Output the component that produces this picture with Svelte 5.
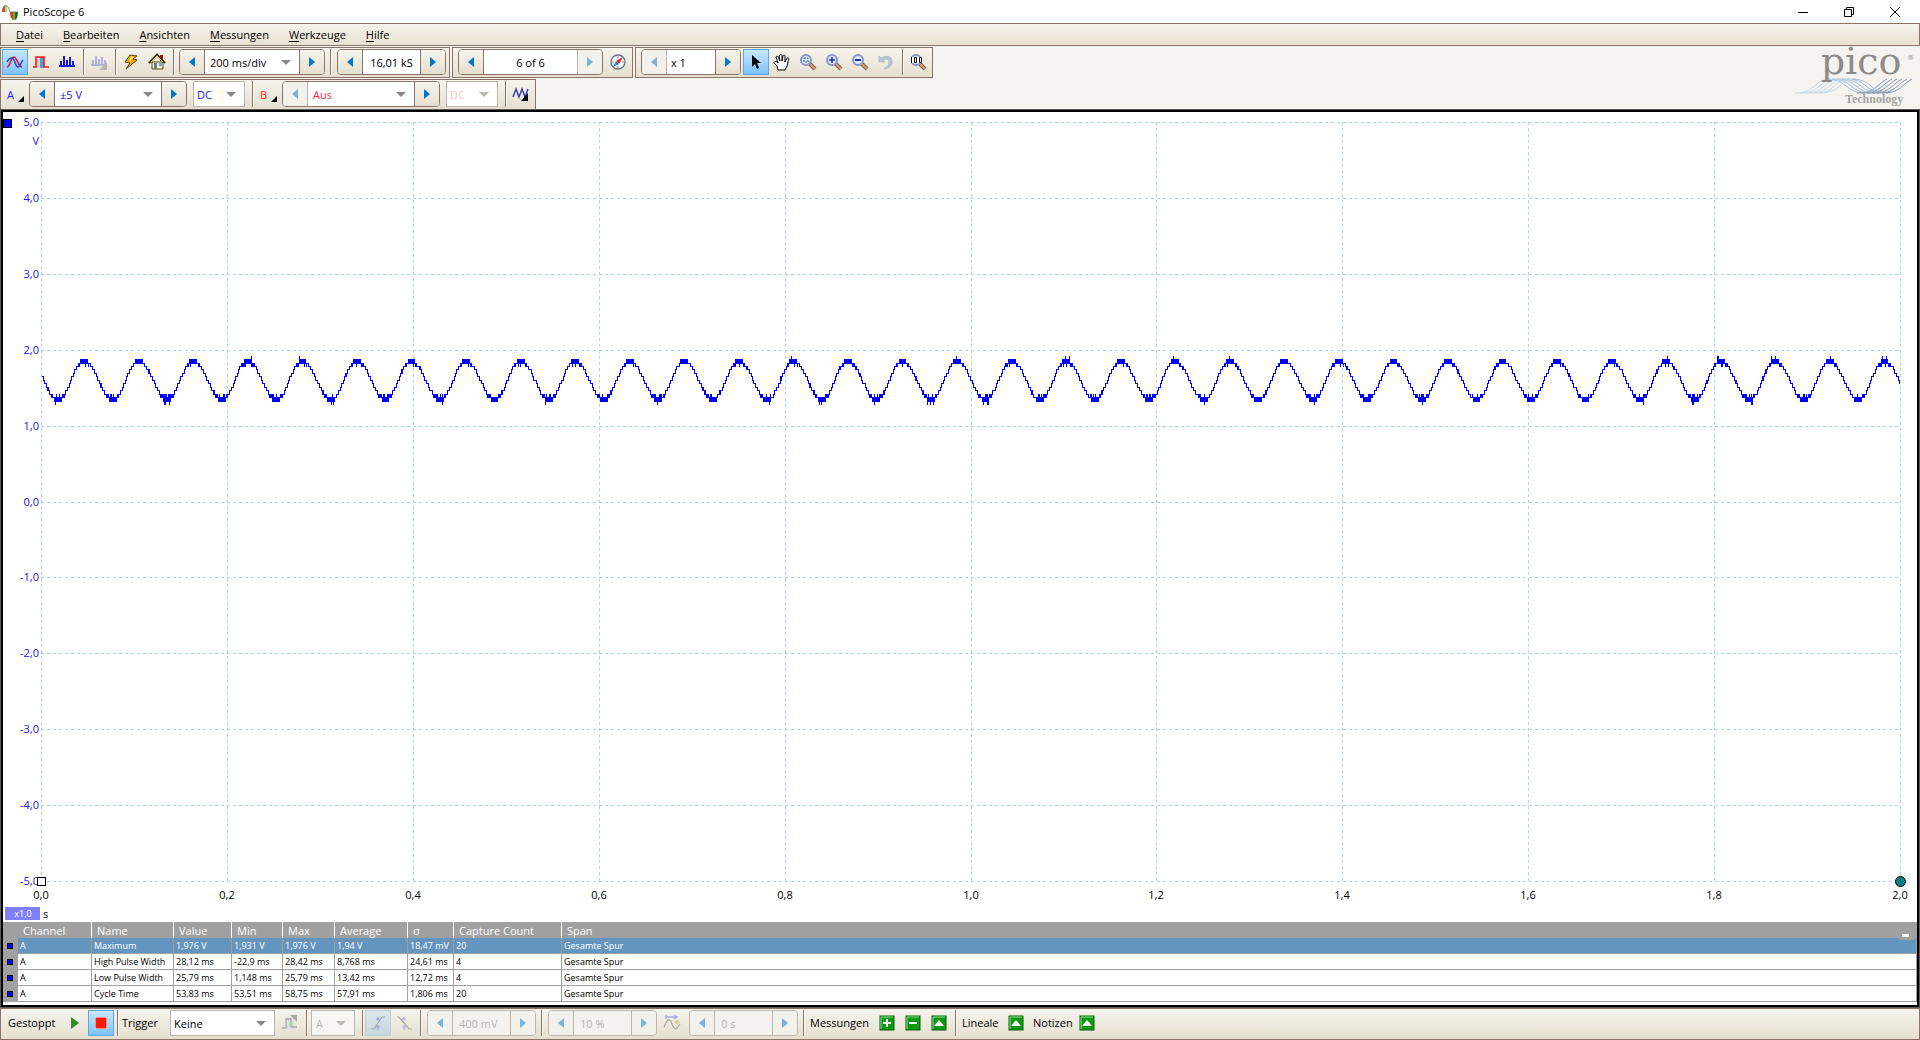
<script lang="ts">
  interface Measurement {
    channel: string;
    name: string;
    value: string;
    min: string;
    max: string;
    average: string;
    sigma: string;
    count: string;
    span: string;
  }

  const menu = ['Datei', 'Bearbeiten', 'Ansichten', 'Messungen', 'Werkzeuge', 'Hilfe'];

  const columns = ['Channel', 'Name', 'Value', 'Min', 'Max', 'Average', 'σ', 'Capture Count', 'Span'];

  const measurements: Measurement[] = [
    { channel: 'A', name: 'Maximum', value: '1,976 V', min: '1,931 V', max: '1,976 V', average: '1,94 V', sigma: '18,47 mV', count: '20', span: 'Gesamte Spur' },
    { channel: 'A', name: 'High Pulse Width', value: '28,12 ms', min: '-22,9 ms', max: '28,42 ms', average: '8,768 ms', sigma: '24,61 ms', count: '4', span: 'Gesamte Spur' },
    { channel: 'A', name: 'Low Pulse Width', value: '25,79 ms', min: '1,148 ms', max: '25,79 ms', average: '13,42 ms', sigma: '12,72 ms', count: '4', span: 'Gesamte Spur' },
    { channel: 'A', name: 'Cycle Time', value: '53,83 ms', min: '53,51 ms', max: '58,75 ms', average: '57,91 ms', sigma: '1,806 ms', count: '20', span: 'Gesamte Spur' }
  ];

  let selected = $state(0);

  // size of the scope view, follows the window
  let width = $state(1914);
  let height = $state(810);

  const left = 38;
  const top = 10;
  let right = $derived(width - 17);
  let bottom = $derived(height - 41);

  const steps = [0, 1, 2, 3, 4, 5, 6, 7, 8, 9, 10];
  let gridX = $derived(steps.map((i) => Math.round(left + ((right - left) * i) / 10)));
  let gridY = $derived(steps.map((i) => Math.round(top + ((bottom - top) * i) / 10)));

  const comma = (n: number) => n.toFixed(1).replace('.', ',');

  // one vertical stroke per pixel column, from the lowest to the highest ADC level
  function buildTrace(x0: number, x1: number, y0: number, y1: number) {
    const lsb = 0.0455;
    const offset = 0.011;
    const period = 0.05869;
    let seed = 77;
    const random = () => {
      seed = (seed * 1103515245 + 12345) % 2147483648;
      return seed / 2147483648;
    };
    const toLevel = (v: number) => Math.round((v - offset) / lsb);
    const toY = (level: number) => Math.round(y0 + ((5 - level * lsb - offset) / 10) * (y1 - y0));

    let path = '';
    let lastLow = 0;
    let lastHigh = 0;
    for (let x = x0 + 1; x < x1; x++) {
      const t = ((x - x0) / (x1 - x0)) * 2;
      let p = (t - 0.0457) / period;
      p = p - Math.floor(p);
      const c = p < 0.53 ? Math.cos((Math.PI * p) / 0.53) : Math.cos(Math.PI * (1 + (p - 0.53) / 0.47));
      const v = 1.605 + 0.257 * c;
      let low = toLevel(v - 0.022 * random());
      let high = toLevel(v + 0.022 * random());
      if (c > 0.9) {
        high = random() < 0.08 ? 42 : 41;
        low = random() < 0.1 ? 39 : 40;
      } else if (c > 0.75 && random() < 0.6) {
        low = 39;
        high = 40;
      } else if (c < -0.9) {
        low = random() < 0.08 ? 28 : 29;
        high = random() < 0.35 ? 31 : 30;
      } else if (c < -0.7 && random() < 0.7) {
        low = 30;
        high = 31;
      }
      if (x > x0 + 1) {
        if (low > lastHigh) low = lastHigh;
        if (high < lastLow) high = lastLow;
      }
      lastLow = low;
      lastHigh = high;
      path += `M${x + 0.5} ${toY(high)}V${toY(low) + 1}`;
    }
    return path;
  }

  let trace = $derived(buildTrace(left, right, top, bottom));
</script>

{#snippet icon(name: string)}
  <svg class="icon" width="18" height="18" viewBox="0 0 18 18" fill="none" aria-hidden="true">
    {#if name === 'scope'}
      <path d="M1 14C4 14 5 4 8 4S12 14 16 14" stroke="#e8202c" stroke-width="1.7" />
      <path d="M1 9C2 7 4 5 6 5C9 5 9 14 12 14C14 14 15 9 17 7" stroke="#2348c4" stroke-width="1.5" />
    {:else if name === 'persistence'}
      <rect x="5" y="4" width="4" height="10" fill="#fbd0d0" />
      <rect x="8" y="4" width="4" height="11" fill="#38a8dc" />
      <path d="M1 14H4V4H12V14H17" stroke="#ff1515" stroke-width="1.6" />
    {:else if name === 'spectrum'}
      <path d="M1 13H17M3 13V8M6 13V3M9 13V7M12 13V4M15 13V8" stroke="#1818d8" stroke-width="2" />
    {:else if name === 'spectrumOff'}
      <path d="M1 12H17M3 12V7M6 12V3M9 12V6M12 12V4M15 12V7" stroke="#b1b2d6" stroke-width="2" />
      <path d="M17 9V17H9Z" fill="#b9b5ad" />
    {:else if name === 'bolt'}
      <path d="M8 2L15 3L11 6L15 7L4 16L8 10L3 9Z" fill="#f5a900" stroke="#574010" stroke-width="1" />
      <path d="M9 3L12 4L7 9Z" fill="#ffe86b" />
    {:else if name === 'home'}
      <rect x="12" y="2" width="3" height="6" fill="#a01818" />
      <path d="M4 9H15V16H4Z" fill="#fff0b2" stroke="#584820" />
      <path d="M1 10L9 2L17 10" stroke="#3c3420" stroke-width="2.4" />
      <path d="M3 9L9 3L15 9" stroke="#f4cf50" stroke-width="1" />
      <rect x="6" y="10" width="3" height="6" fill="#5f7da1" />
      <rect x="11" y="10" width="3" height="3" fill="#76a7d6" />
    {:else if name === 'compass'}
      <circle cx="9" cy="9" r="7" fill="#f6f7fb" stroke="#6d7185" stroke-width="1.3" />
      <path d="M9 3V5M9 13V15M3 9H5M13 9H15" stroke="#8d90a6" />
      <path d="M14 4L10 11L7 8Z" fill="#ef2430" />
      <path d="M4 14L7 8L10 11Z" fill="#2e7bd6" />
    {:else if name === 'pointer'}
      <path d="M5 2V14L8 11L10 16L12 15L10 10H14Z" fill="#000" />
    {:else if name === 'hand'}
      <path d="M5 17L4 13L1 10C1 8 3 8 5 10L3 4C4 2 5 3 6 6L7 8L6 3C7 1 9 1 9 3V8L10 3C11 1 12 2 12 4L12 9L14 5C16 4 16 6 15 9L14 13L12 17Z" fill="#fff" stroke="#000" stroke-width="1" />
    {:else if name === 'undo'}
      <path d="M2 3V9H8L6 7C9 5 12 6 12 9C12 12 10 14 7 16C13 15 15 12 15 8C15 3 9 2 4 5Z" fill="#bcc4d6" stroke="#a4aec4" stroke-width="0.7" />
    {:else if name === 'waves'}
      <path d="M1 12L4 4L7 12L10 4L13 12L16 4" stroke="#3838ae" stroke-width="1.4" />
      <path d="M16 8V16H9Z" fill="#000" />
    {:else if name === 'advanced'}
      <rect x="6" y="3" width="7" height="13" fill="#d9e4e1" />
      <path d="M1 14H5V5H10V13H16" stroke="#aaa79f" stroke-width="1.3" />
      <path d="M9 1H16V8Z" fill="#aaa79f" />
      <circle cx="10" cy="10" r="2" fill="#a1dda5" />
    {:else if name === 'rising'}
      <path d="M2 15H5L13 3H16" stroke="#9fa8a8" stroke-width="1.2" />
      <path d="M9 3V7M7 5H11M9 11V16M7 13H11" stroke="#a09cea" stroke-width="1.2" />
    {:else if name === 'falling'}
      <path d="M2 3H4L14 15H17" stroke="#a7a49e" stroke-width="1.2" />
      <path d="M9 3V7M7 5H11M9 11V16M7 13H11" stroke="#b1aee0" stroke-width="1.2" />
    {:else if name === 'delay'}
      <path d="M1 13L4 7C6 4 8 7 9 10S12 16 14 14L17 10" stroke="#aaa6a0" stroke-width="1.2" />
      <path d="M3 3H13M3 1V5M11 1L14 3L11 5" stroke="#aaa7e1" stroke-width="1.3" />
      <path d="M14 5L17 8L14 11L11 8Z" fill="#d6d59d" />
    {:else}
      <path d="M10 10L16 16" stroke="#6d6662" stroke-width="4" />
      <path d="M10 10L16 16" stroke="#dc9864" stroke-width="2" />
      <circle cx="7" cy="7" r="5" fill="#d6edff" stroke="#8b94c2" stroke-width="2" />
      {#if name === 'zoomIn'}
        <path d="M4 7H10M7 4V10" stroke="#26349c" stroke-width="1.6" />
      {:else if name === 'zoomOut'}
        <path d="M4 7H10" stroke="#26349c" stroke-width="2" />
      {:else if name === 'zoomArea'}
        <rect x="5" y="5" width="4" height="4" stroke="#43549c" stroke-dasharray="2 1" />
      {:else}
        <rect x="1" y="4" width="12" height="6" fill="#fff" />
        <path d="M2.5 4V10M5.500 4.500H7.500V9.500H5.500ZM10.500 4.500H12.500V9.500H10.500Z" stroke="#111" stroke-width="1" />
      {/if}
    {/if}
  </svg>
{/snippet}

{#snippet tool(name: string, label: string, active: boolean = false, disabled: boolean = false)}
  <button class="tool" class:active {disabled} aria-label={label}>{@render icon(name)}</button>
{/snippet}

{#snippet arrow(direction: string, disabled: boolean = false)}
  <button class="arrow {direction}" {disabled} aria-label={direction === 'prev' ? 'Zurück' : 'Weiter'}>
    <svg width="6" height="10" viewBox="0 0 6 10" aria-hidden="true">
      <path d={direction === 'prev' ? 'M6 0V10L0 5Z' : 'M0 0V10L6 5Z'} fill="#0078c8" />
    </svg>
  </button>
{/snippet}

{#snippet green(name: string, label: string)}
  <button class="green" aria-label={label}>
    <svg width="16" height="16" viewBox="0 0 16 16" aria-hidden="true">
      <rect x="1" y="1" width="14" height="14" fill="#0c9a12" stroke="#075c09" />
      <path d="M2 14V2H14" fill="none" stroke="#8fdc90" />
      {#if name === 'up'}
        <path d="M3 11L8 5L13 11Z" fill="#fff" />
      {:else}
        <path d={name === 'plus' ? 'M4 8H12M8 4V12' : 'M4 8H12'} stroke="#fff" stroke-width="2" />
      {/if}
    </svg>
  </button>
{/snippet}

<div class="window">
  <header class="titlebar">
    <svg width="18" height="18" viewBox="0 0 18 18" aria-hidden="true">
      <path d="M1 9C2 1 7 0 9 9Z" fill="#e5f4dc" />
      <path d="M1 9C2 5 2 3 4 2V9Z" fill="#f04040" />
      <path d="M4 2C6 2 6 5 6 9H4Z" fill="#a7e060" />
      <path d="M9 9H12V17C10 16 9 13 9 9Z" fill="#d44418" />
      <path d="M12 9H14V17H12Z" fill="#68b52c" />
      <path d="M14 9H17C17 13 16 16 14 17Z" fill="#176e25" />
      <path d="M1 9C2 1 7 0 9 9M9 9H17" fill="none" stroke="#6a6a5c" stroke-width="0.8" />
    </svg>
    <span class="caption">PicoScope 6</span>
    <div class="window-buttons">
      <button aria-label="Minimieren"><svg width="10" height="10" viewBox="0 0 10 10"><path d="M0 5.5H10" stroke="#000" /></svg></button>
      <button aria-label="Wiederherstellen">
        <svg width="10" height="10" viewBox="0 0 10 10" fill="none" stroke="#000"><path d="M.5 2.5H7.5V9.5H.5ZM2.5 2.5V.5H9.5V7.5H7.5" /></svg>
      </button>
      <button aria-label="Schließen"><svg width="10" height="10" viewBox="0 0 10 10" stroke="#000"><path d="M0 0L10 10M10 0L0 10" /></svg></button>
    </div>
  </header>

  <nav class="menu">
    {#each menu as item}
      <button><u>{item[0]}</u>{item.slice(1)}</button>
    {/each}
  </nav>

  <div class="tools">
    <div class="tool-rows">
      <div class="tool-row">
        <div class="bar">
          {@render tool('scope', 'Oszilloskop', true)}
          {@render tool('persistence', 'Persistenz')}
          {@render tool('spectrum', 'Spektrum')}
          <span class="separator"></span>
          {@render tool('spectrumOff', 'Spektrumoptionen', false, true)}
          <span class="separator"></span>
          {@render tool('bolt', 'Auto-Setup')}
          {@render tool('home', 'Start')}
          <span class="separator"></span>
          <div class="group">
            {@render arrow('prev')}
            <span class="drop timebase"><select aria-label="Zeitbasis"><option>200 ms/div</option></select></span>
            {@render arrow('next')}
          </div>
          <span class="separator"></span>
          <div class="group far">
            {@render arrow('prev')}
            <input class="samples" aria-label="Abtastungen" value="16,01 kS" />
            {@render arrow('next')}
          </div>
        </div>
        <div class="bar indent">
          <div class="group">
            {@render arrow('prev')}
            <input class="buffer" aria-label="Puffer" value="6 of 6" />
            {@render arrow('next', true)}
          </div>
          {@render tool('compass', 'Puffernavigator')}
        </div>
        <div class="bar indent">
          <div class="group">
            {@render arrow('prev', true)}
            <input class="zoom" aria-label="Zoomfaktor" value="x 1" />
            {@render arrow('next')}
          </div>
          {@render tool('pointer', 'Auswahl', true)}
          {@render tool('hand', 'Verschieben')}
          {@render tool('zoomArea', 'Bereich zoomen')}
          {@render tool('zoomIn', 'Vergrößern')}
          {@render tool('zoomOut', 'Verkleinern')}
          {@render tool('undo', 'Zoom rückgängig')}
          <span class="separator"></span>
          {@render tool('zoomFull', 'Volle Ansicht')}
        </div>
      </div>

      <div class="tool-row">
        <div class="bar">
          <button class="tool channel a">A</button>
          <div class="group near">
            {@render arrow('prev')}
            <span class="drop range a"><select aria-label="Bereich A"><option>±5 V</option></select></span>
            {@render arrow('next')}
          </div>
          <span class="drop boxed coupling a"><select aria-label="Kopplung A"><option>DC</option></select></span>
          <span class="separator"></span>
          <button class="tool channel b">B</button>
          <div class="group near">
            {@render arrow('prev', true)}
            <span class="drop range b"><select aria-label="Bereich B"><option>Aus</option></select></span>
            {@render arrow('next')}
          </div>
          <span class="drop boxed coupling b off"><select aria-label="Kopplung B" disabled><option>DC</option></select></span>
          <span class="separator"></span>
          {@render tool('waves', 'Signalgenerator')}
        </div>
      </div>
    </div>

    <svg class="logo" width="128" height="62" viewBox="0 0 128 62" role="img" aria-label="pico Technology">
      <g fill="none" stroke-width="1">
        {#each [0, 1, 2, 3, 4, 5] as i}
          <path d="M{4 + i * 5} 47C{26 + i * 5} 47 {22 + i * 5} 33 {40 + i * 5} 33" stroke="#c4d9e9" />
          <path d="M{36 + i * 5} 33C{56 + i * 5} 33 {54 + i * 5} 47 {74 + i * 5} 47" stroke="#a6bcd2" />
          <path d="M{66 + i * 5} 47C{84 + i * 5} 47 {84 + i * 5} 40 {96 + i * 5} 33" stroke="#8090a8" />
        {/each}
      </g>
      <text x="70" y="28" class="logo-name" text-anchor="middle">pico</text>
      <text x="116" y="14" class="logo-mark">®</text>
      <text x="54" y="57" class="logo-sub">Technology</text>
    </svg>
  </div>

  <main class="view">
    <div class="chart" bind:clientWidth={width} bind:clientHeight={height}>
      <svg {width} {height} role="img" aria-label="Kanal A">
        <g class="grid">
          {#each gridY as y}
            <path d="M{left} {y + 0.5}H{right}" />
          {/each}
          {#each gridX as x}
            <path d="M{x + 0.5} {top}V{bottom}" />
          {/each}
        </g>
        <path class="trace" d={trace} />
        <g class="volts" text-anchor="end">
          {#each gridY as y, i}
            <text x="36" y={y + 4}>{comma(5 - i)}</text>
          {/each}
          <text x="36" y="33">V</text>
        </g>
        <g class="seconds" text-anchor="middle">
          {#each gridX as x, i}
            <text {x} y={bottom + 18}>{comma(i / 5)}</text>
          {/each}
        </g>
        <rect x="0.5" y="7.5" width="8" height="8" fill="#0000ff" stroke="#000" />
        <rect x={left - 3.5} y={bottom - 3.5} width="8" height="8" fill="#fff" stroke="#000" />
        <circle cx={right + 0.5} cy={bottom + 0.5} r="5" fill="#008080" stroke="#000" />
        <rect x="2" y={bottom + 26} width="35" height="13" fill="#8080ff" />
        <text class="scale" x="20" y={bottom + 36} text-anchor="middle">x1,0</text>
        <text class="seconds" x="40" y={bottom + 37}>s</text>
      </svg>
    </div>

    <table>
      <colgroup>
        <col class="w-mark" />
        <col class="w-channel" />
        <col class="w-name" />
        <col class="w-value" />
        <col class="w-min" />
        <col class="w-max" />
        <col class="w-average" />
        <col class="w-sigma" />
        <col class="w-count" />
        <col />
      </colgroup>
      <thead>
        <tr>
          <th class="mark"></th>
          {#each columns as column}
            <th>{column}</th>
          {/each}
        </tr>
      </thead>
      <tbody>
        {#each measurements as m, i}
          <tr class:selected={i === selected} onclick={() => (selected = i)}>
            <td class="mark"><span></span></td>
            <td>{m.channel}</td>
            <td>{m.name}</td>
            <td>{m.value}</td>
            <td>{m.min}</td>
            <td>{m.max}</td>
            <td>{m.average}</td>
            <td>{m.sigma}</td>
            <td>{m.count}</td>
            <td>{m.span}</td>
          </tr>
        {/each}
      </tbody>
    </table>
    <button class="collapse" aria-label="Messungen minimieren"></button>
  </main>

  <footer class="bar status">
    <span class="label">Gestoppt</span>
    <button class="tool" aria-label="Start">
      <svg width="8" height="12" viewBox="0 0 8 12"><path d="M0 0V12L8 6Z" fill="#2e8b2e" /></svg>
    </button>
    <button class="tool active" aria-label="Stopp">
      <svg width="12" height="12" viewBox="0 0 12 12"><rect width="12" height="12" fill="#ff1a00" stroke="#fff" /></svg>
    </button>
    <span class="separator"></span>
    <label class="label trigger" for="trigger">Trigger</label>
    <span class="drop boxed mode"><select id="trigger"><option>Keine</option></select></span>
    {@render tool('advanced', 'Erweiterter Trigger', false, true)}
    <span class="separator"></span>
    <span class="drop boxed source off"><select aria-label="Triggerquelle" disabled><option>A</option></select></span>
    <span class="separator"></span>
    {@render tool('rising', 'Steigende Flanke', true, true)}
    {@render tool('falling', 'Fallende Flanke', false, true)}
    <span class="separator"></span>
    <div class="group far off">
      {@render arrow('prev', true)}
      <input class="level" aria-label="Schwelle" value="400 mV" disabled />
      {@render arrow('next', true)}
    </div>
    <span class="separator"></span>
    <div class="group far off">
      {@render arrow('prev', true)}
      <input class="level" aria-label="Vortrigger" value="10 %" disabled />
      {@render arrow('next', true)}
    </div>
    {@render tool('delay', 'Verzögerung', false, true)}
    <div class="group far off">
      {@render arrow('prev', true)}
      <input class="level" aria-label="Triggerverzögerung" value="0 s" disabled />
      {@render arrow('next', true)}
    </div>
    <span class="separator"></span>
    <span class="label measure">Messungen</span>
    {@render green('plus', 'Messung hinzufügen')}
    {@render green('minus', 'Messung löschen')}
    {@render green('up', 'Messung bearbeiten')}
    <span class="separator"></span>
    <span class="label rulers">Lineale</span>
    {@render green('up', 'Lineale')}
    <span class="label notes">Notizen</span>
    {@render green('up', 'Notizen')}
  </footer>
</div>

<style>
  :global(body) {
    margin: 0;
    overflow: hidden;
  }

  .window {
    display: flex;
    flex-direction: column;
    height: 100vh;
    background: #f5f3ef;
    color: #000;
    font-family: 'Open Sans', 'Noto Sans', sans-serif;
    font-size: 11px;
  }

  button,
  input,
  select {
    box-sizing: border-box;
    margin: 0;
    padding: 0;
    border: 0;
    border-radius: 0;
    background: none;
    color: inherit;
    font: inherit;
    outline: none;
  }

  svg {
    display: block;
    flex: none;
  }

  .titlebar {
    display: flex;
    align-items: center;
    height: 23px;
    padding-left: 1px;
    background: #fff;
  }

  .caption {
    flex: 1;
    padding-left: 4px;
  }

  .window-buttons {
    display: flex;
    height: 20px;
    padding-right: 2px;
  }

  .window-buttons button {
    display: flex;
    align-items: center;
    justify-content: center;
    width: 46px;
  }

  .menu {
    display: flex;
    gap: 20px;
    box-sizing: border-box;
    height: 23px;
    padding-left: 15px;
    border: 1px solid #8a7468;
    background: linear-gradient(#f6f3ec, #e9e1d1);
  }

  .menu button {
    padding-bottom: 1px;
  }

  .menu u {
    text-underline-offset: 2px;
  }

  .tools {
    display: flex;
    justify-content: space-between;
    height: 63px;
  }

  .tool-rows {
    display: flex;
    flex-direction: column;
    gap: 1px;
    padding-top: 1px;
  }

  .tool-row {
    display: flex;
    gap: 2px;
  }

  .bar {
    display: flex;
    align-items: flex-start;
    box-sizing: border-box;
    height: 31px;
    padding: 1px;
    border: 1px solid #8a7468;
    background: linear-gradient(#f6f4ee, #e6dfcf);
  }

  .bar.indent {
    padding-left: 2px;
  }

  .separator {
    flex: none;
    width: 1px;
    height: 26px;
    margin: 0 2px 0 3px;
    background: #8a7468;
    box-shadow: 1px 0 #fbf9f5;
  }

  .tool {
    position: relative;
    display: flex;
    flex: none;
    align-items: center;
    justify-content: center;
    width: 26px;
    height: 26px;
  }

  .tool.active {
    border: 1px solid #5fa6e6;
    background: linear-gradient(#c8e8fd, #7cc3ff);
  }

  .tool.active:disabled {
    border-color: #bdcfd4;
    background: linear-gradient(#dde8e8, #c4d8e0);
  }

  .group {
    display: flex;
    flex: none;
    box-sizing: border-box;
    height: 26px;
    margin: 0 2px 0 3px;
    border: 1px solid #8a7468;
    border-radius: 4px;
    background: #fff;
    overflow: hidden;
  }

  .group.near {
    margin-left: 1px;
  }

  .group.far {
    margin-left: 4px;
  }

  .group.off {
    border-color: #bdb3a9;
    background: #f4f2ee;
    color: #b9b5b0;
  }

  .arrow {
    display: flex;
    align-items: center;
    justify-content: center;
    width: 25px;
    background: linear-gradient(#f6f4ee, #e6dfcf);
  }

  .arrow.prev {
    border-right: 1px solid #8a7468;
  }

  .arrow.next {
    border-left: 1px solid #8a7468;
  }

  .arrow:disabled {
    border-color: #bdb3a9;
    background: #f3f1ec;
  }

  .arrow:disabled svg {
    opacity: 0.5;
  }

  input {
    text-align: center;
  }

  .samples {
    width: 57px;
  }

  .buffer {
    width: 93px;
  }

  .zoom {
    width: 48px;
    padding-left: 4px;
    text-align: left;
  }

  .level {
    width: 57px;
    padding-left: 6px;
    text-align: left;
  }

  .drop {
    position: relative;
    display: flex;
    flex: none;
    box-sizing: border-box;
  }

  .drop select {
    width: 100%;
    padding-left: 5px;
    appearance: none;
    opacity: 1;
  }

  .drop::after {
    content: '';
    position: absolute;
    top: 50%;
    right: 8px;
    margin-top: -2px;
    border: 5px solid transparent;
    border-top-color: #888;
    border-bottom-width: 0;
    pointer-events: none;
  }

  .drop.boxed {
    height: 26px;
    margin: 0 4px;
    border: 1px solid #bdb3a9;
    background: #fff;
  }

  .drop.off::after {
    border-top-color: #bdb8b0;
  }

  .timebase {
    width: 94px;
  }

  .range {
    width: 106px;
  }

  .coupling {
    width: 52px;
  }

  .coupling select {
    padding-left: 3px;
  }

  .coupling.off {
    color: #fbc6c6;
  }

  .mode {
    width: 105px;
  }

  .drop.mode {
    margin-right: 2px;
  }

  .mode select {
    padding-left: 3px;
  }

  .source {
    width: 44px;
  }

  .drop.source {
    margin: 0 4px 0 2px;
    background: #f8f6f3;
    color: #b9b5b0;
  }

  .source select {
    padding-left: 4px;
  }

  .a {
    color: #2218ee;
  }

  .b {
    color: #f52a35;
  }

  .channel {
    justify-content: flex-start;
    padding-left: 5px;
  }

  .channel::after {
    content: '';
    position: absolute;
    right: 4px;
    bottom: 5px;
    border: 3px solid #000;
    border-top-color: transparent;
    border-left-color: transparent;
  }

  .logo {
    margin-right: 1px;
    overflow: visible;
    font-family: 'DejaVu Serif', serif;
    fill: #8b8b8b;
  }

  .logo-name {
    font-size: 38px;
  }

  .logo-mark {
    font-size: 7px;
  }

  .logo-sub {
    font-family: 'Liberation Serif', serif;
    font-size: 12px;
    font-weight: bold;
    fill: #a2a2a2;
  }

  .view {
    position: relative;
    display: flex;
    flex: 1;
    flex-direction: column;
    min-height: 0;
    padding-bottom: 3px;
    border: 2px solid #000;
    outline: 1px solid #5b5b5b;
    margin: 1px;
    background: #fff;
  }

  .chart {
    flex: 1;
    min-height: 0;
    overflow: hidden;
  }

  .grid path {
    stroke: #abd7e4;
    stroke-dasharray: 3 3;
  }

  .trace {
    stroke: #0000ff;
    shape-rendering: crispEdges;
  }

  .volts {
    fill: #2010f0;
  }

  .seconds {
    fill: #000;
  }

  .scale {
    fill: #fff;
    font-size: 9px;
  }

  table {
    width: 100%;
    table-layout: fixed;
    border-collapse: separate;
    border-spacing: 0;
    font-size: 9px;
    white-space: nowrap;
  }

  .w-mark {
    width: 15px;
  }

  .w-channel {
    width: 74px;
  }

  .w-name {
    width: 82px;
  }

  .w-value {
    width: 58px;
  }

  .w-min {
    width: 51px;
  }

  .w-max {
    width: 52px;
  }

  .w-average {
    width: 73px;
  }

  .w-sigma {
    width: 46px;
  }

  .w-count {
    width: 108px;
  }

  th,
  td {
    box-sizing: border-box;
    height: 16px;
    text-align: left;
    line-height: 15px;
  }

  th {
    padding: 0 0 0 5px;
    border-right: 1px solid #fff;
    background: #a0a0a0;
    color: #fff;
    font-size: 11px;
    font-weight: normal;
  }

  th.mark,
  th:last-child {
    border-right: 0;
  }

  td {
    padding: 0 0 0 2px;
    border-right: 1px solid #a0a0a0;
    border-bottom: 1px solid #a0a0a0;
  }

  .selected td {
    background: #6495bf;
    color: #fff;
  }

  td.mark,
  .selected td.mark {
    padding-left: 4px;
    background: #a0a0a0;
  }

  .mark span {
    display: block;
    width: 4px;
    height: 4px;
    border: 1px solid #000;
    background: #0000ff;
  }

  .collapse {
    position: absolute;
    right: 2px;
    bottom: 65px;
    width: 16px;
    height: 9px;
    padding: 3px 6px 3px 3px;
    background-color: #a0a0a0;
    background-image: linear-gradient(#fff, #fff);
    background-origin: content-box;
    background-size: 7px 3px;
    background-repeat: no-repeat;
  }

  .status {
    height: 32px;
  }

  .label {
    box-sizing: border-box;
    flex: none;
    width: 60px;
    padding-left: 6px;
    line-height: 26px;
  }

  .label.trigger {
    width: 46px;
    padding-left: 2px;
  }

  .label.measure {
    width: 68px;
    padding-left: 4px;
  }

  .label.rulers,
  .label.notes {
    width: 45px;
    padding-left: 4px;
  }

  .green {
    display: flex;
    flex: none;
    align-items: center;
    justify-content: center;
    width: 26px;
    height: 26px;
  }
</style>
